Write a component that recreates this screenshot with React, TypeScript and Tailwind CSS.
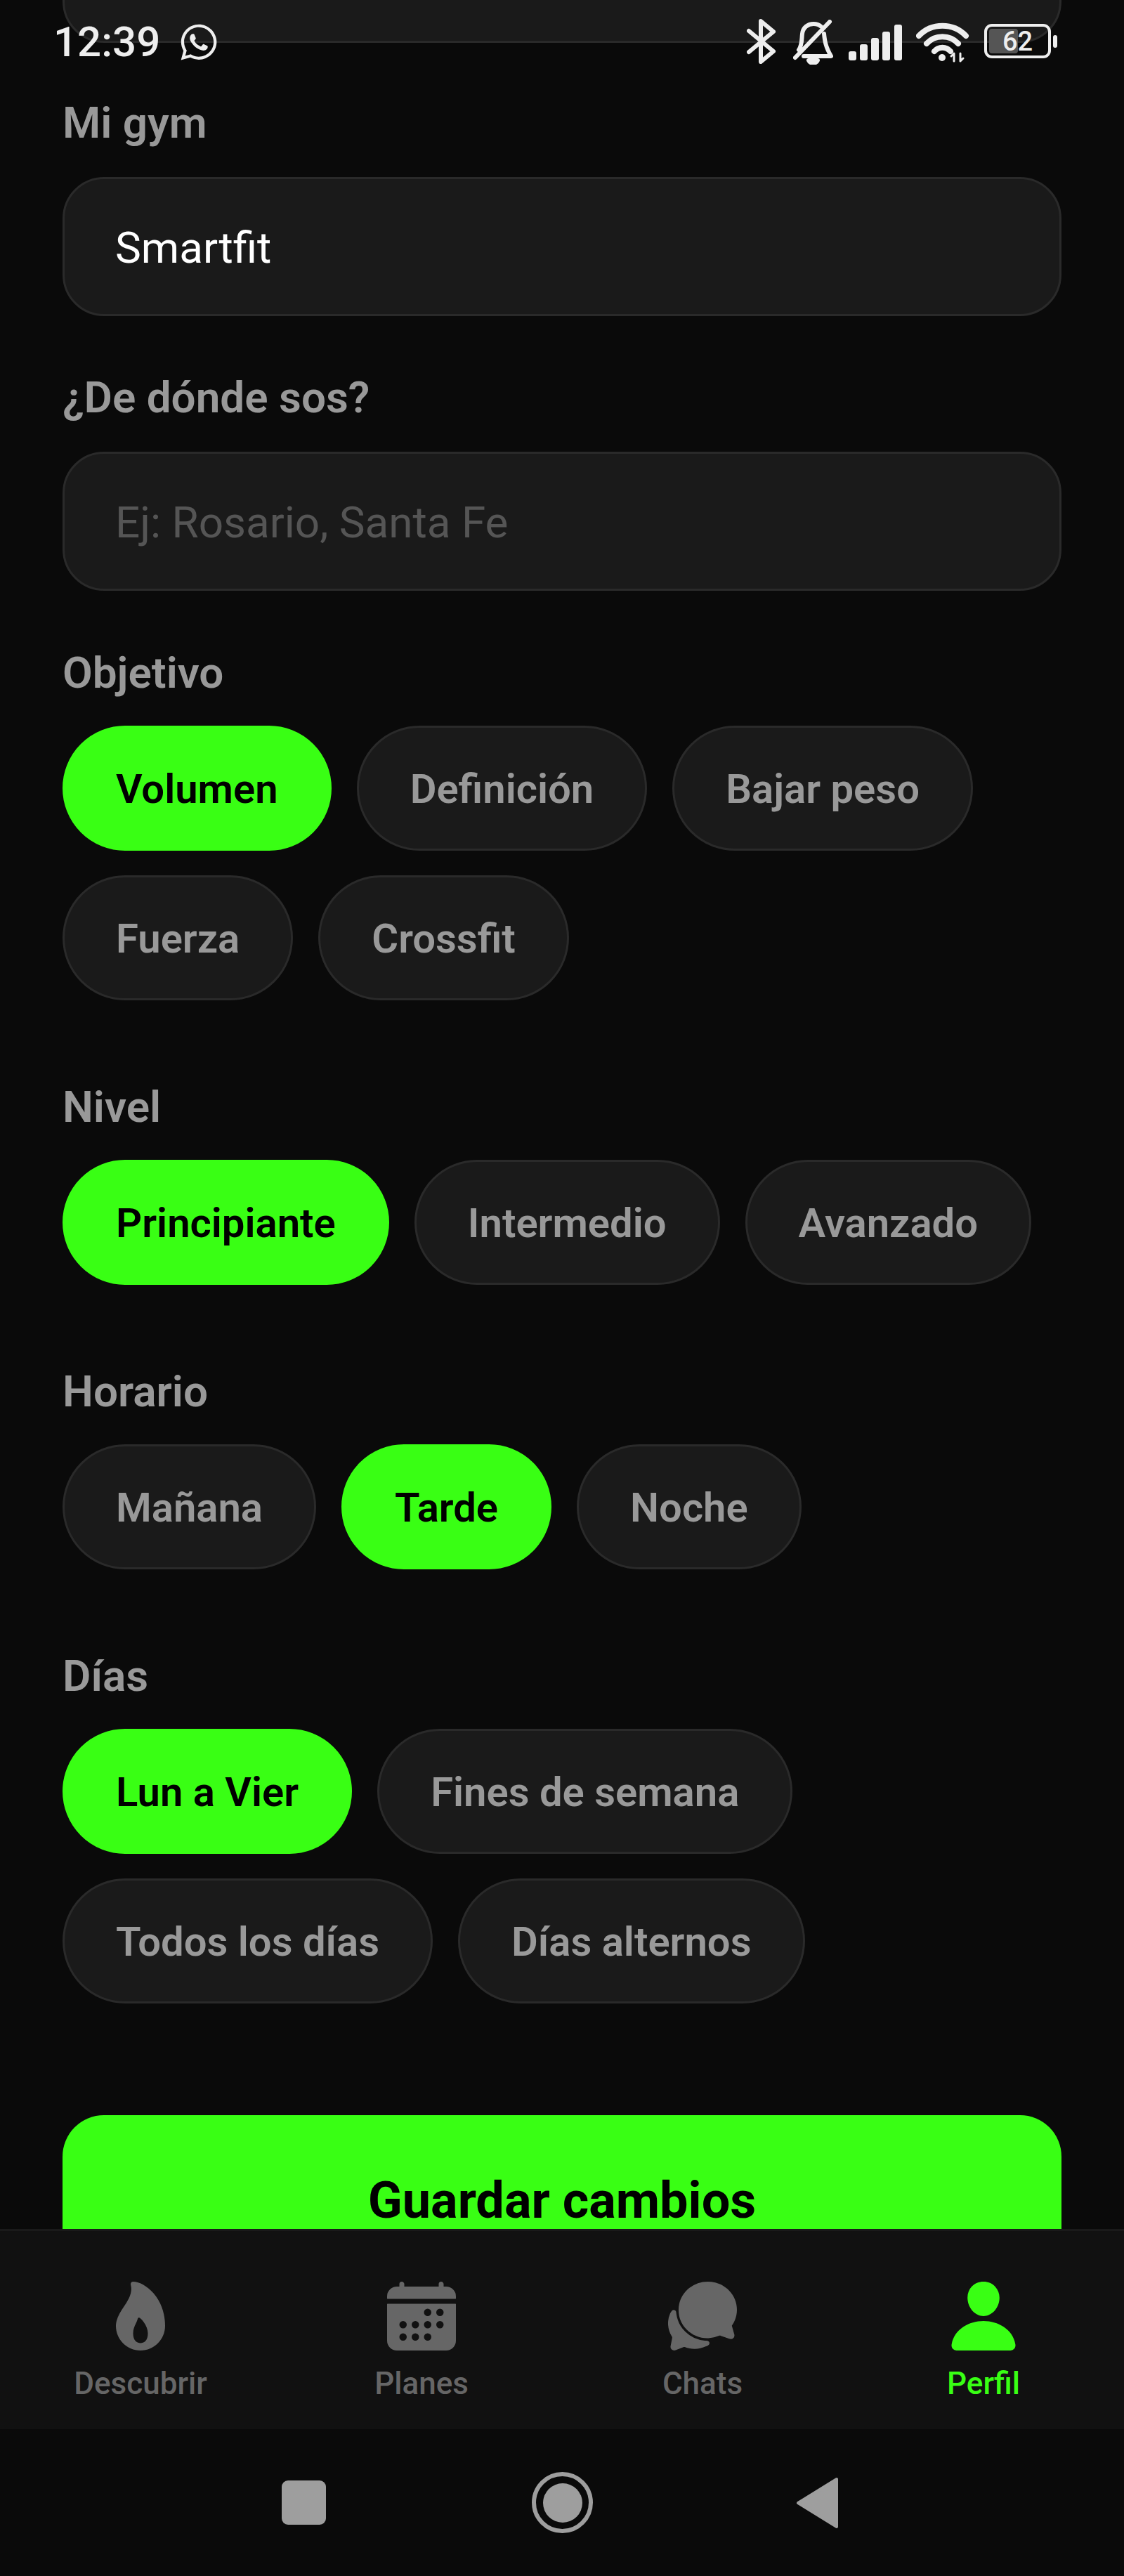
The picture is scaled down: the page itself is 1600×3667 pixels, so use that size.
import { FaWhatsapp } from 'react-icons/fa'
import { IoCalendar, IoChatbubbles, IoFlame, IoPerson } from 'react-icons/io5'
import type { ReactNode } from 'react'

function Chip({ label, active }: { label: string; active?: boolean }) {
  return (
    <div
      className={
        active
          ? 'h-[178px] rounded-full border-[3px] border-[#39ff14] bg-[#39ff14] px-[73px] pt-[3px] flex items-center text-[58px] font-semibold text-black'
          : 'h-[178px] rounded-full border-[3px] border-[#2a2a2a] bg-[#1a1a1a] px-[73px] pt-[3px] flex items-center text-[58px] font-semibold text-[#999999]'
      }
    >
      {label}
    </div>
  )
}

function ChipGroup({ title, chips, active, className }: { title: string; chips: string[]; active: string; className: string }) {
  return (
    <section className={className}>
      <div className="h-[70px] leading-[70px] text-[62px] font-semibold text-[#999999]">{title}</div>
      <div className="mt-[40px] flex flex-wrap gap-x-[36px] gap-y-[35px]">
        {chips.map((c) => (
          <Chip key={c} label={c} active={c === active} />
        ))}
      </div>
    </section>
  )
}

function Field({ label, value, placeholder, className }: { label: string; value?: string; placeholder?: string; className: string }) {
  return (
    <section className={className}>
      <div className="h-[70px] leading-[70px] text-[62px] font-semibold text-[#999999]">{label}</div>
      <div className="mt-[42px] h-[198px] rounded-[59px] border-[3px] border-[#2a2a2a] bg-[#1a1a1a] px-[72px] pt-[3px] flex items-center text-[62px]">
        {value ? <span className="text-white">{value}</span> : <span className="text-[#555555]">{placeholder}</span>}
      </div>
    </section>
  )
}

function NavItem({ icon, label, active }: { icon: ReactNode; label: string; active?: boolean }) {
  return (
    <div className={active ? 'flex flex-col items-center text-[#39ff14]' : 'flex flex-col items-center text-[#666666]'}>
      {icon}
      <span className="mt-[14px] text-[44px] leading-[52px] font-medium">{label}</span>
    </div>
  )
}

function StatusBar() {
  return (
    <div className="absolute inset-x-0 top-0 h-[100px] text-[#eeeeee]">
      <div className="absolute left-[76px] top-[27px] text-[60px] leading-[66px] font-medium">12:39</div>
      <FaWhatsapp className="absolute left-[254px] top-[31px]" size={58} />
      <svg className="absolute left-[1063px] top-[27px]" width="42" height="64" viewBox="0 0 42 64" fill="none" stroke="#eeeeee" strokeWidth="6" strokeLinejoin="round" strokeLinecap="round">
        <path d="M3 17 L38 46 L20 61 V3 L38 18 L3 47" />
      </svg>
      <svg className="absolute left-[1129px] top-[28px]" width="57" height="64" viewBox="0 0 57 64" fill="none" stroke="#eeeeee" strokeWidth="6" strokeLinecap="round" strokeLinejoin="round">
        <path d="M8 43 C13 36 12 28 13 20 C14 11 21 6 29 6 C33 6 37 7 40 10" />
        <path d="M44 20 C45 30 46 38 54 52 H15" />
        <path d="M3 54 L52 3" />
        <path d="M22 58 H35 C33 63 24 63 22 58 Z" fill="#eeeeee" />
      </svg>
      <svg className="absolute left-[1208px] top-[35px]" width="76" height="51" viewBox="0 0 76 51" fill="#eeeeee">
        <rect x="0" y="38" width="11" height="13" rx="3" />
        <rect x="16" y="28" width="11" height="23" rx="3" />
        <rect x="32" y="19" width="11" height="32" rx="3" />
        <rect x="48" y="10" width="11" height="41" rx="3" />
        <rect x="65" y="0" width="11" height="51" rx="3" />
      </svg>
      <svg className="absolute left-[1304px] top-[32px]" width="76" height="58" viewBox="0 0 76 58" fill="none" stroke="#eeeeee" strokeWidth="8" strokeLinecap="round">
        <path d="M4 19 C22 0 53 0 71 19" />
        <path d="M15 30 C27 17 48 17 60 30" />
        <path d="M26 41 C32 34 43 34 49 41" />
        <circle cx="37" cy="50" r="5" fill="#eeeeee" stroke="none" />
        <path d="M54 55 V44 M54 44 L50 48 M63 44 V55 M63 55 L67 51" strokeWidth="3" />
      </svg>
      <div className="absolute left-[1401px] top-[34px] h-[49px] w-[95px] rounded-[11px] border-[4px] border-[#eeeeee] p-[3px]">
        <div className="h-full w-[50%] rounded-[4px] bg-[#555555]" />
        <div className="absolute inset-0 flex items-center justify-center text-[38px] leading-none font-medium text-[#eeeeee]">62</div>
      </div>
      <div className="absolute left-[1499px] top-[50px] h-[18px] w-[6px] rounded-full bg-[#eeeeee]" />
    </div>
  )
}

export default function App() {
  return (
    <div className="relative flex h-[3667px] w-[1600px] flex-col overflow-hidden bg-[#0a0a0a] font-['Roboto',sans-serif]">
      <main className="min-h-0 flex-1 overflow-hidden px-[89px]">
        <div className="-mt-[137px] h-[198px] rounded-[59px] border-[3px] border-[#2a2a2a] bg-[#1a1a1a]" />
        <Field className="mt-[79px]" label="Mi gym" value="Smartfit" />
        <Field className="mt-[81px]" label="¿De dónde sos?" placeholder="Ej: Rosario, Santa Fe" />
        <ChipGroup className="mt-[82px]" title="Objetivo" chips={['Volumen', 'Definición', 'Bajar peso', 'Fuerza', 'Crossfit']} active="Volumen" />
        <ChipGroup className="mt-[117px]" title="Nivel" chips={['Principiante', 'Intermedio', 'Avanzado']} active="Principiante" />
        <ChipGroup className="mt-[117px]" title="Horario" chips={['Mañana', 'Tarde', 'Noche']} active="Tarde" />
        <ChipGroup className="mt-[117px]" title="Días" chips={['Lun a Vier', 'Fines de semana', 'Todos los días', 'Días alternos']} active="Lun a Vier" />
        <button className="mt-[159px] h-[240px] w-full rounded-[59px] bg-[#39ff14] pt-[3px] text-[72px] font-bold text-black">Guardar cambios</button>
      </main>

      <nav className="grid h-[285px] shrink-0 grid-cols-4 border-t-[3px] border-[#1a1a1a] bg-[#111111] pt-[65px]">
        <NavItem icon={<IoFlame size={112} />} label="Descubrir" />
        <NavItem icon={<IoCalendar size={112} />} label="Planes" />
        <NavItem icon={<IoChatbubbles size={112} />} label="Chats" />
        <NavItem icon={<IoPerson size={112} />} label="Perfil" active />
      </nav>

      <div className="flex h-[209px] shrink-0 items-center justify-center bg-[#0a0a0a] pr-[6px]">
        <div className="h-[63px] w-[63px] rounded-[9px] bg-[#9e9e9e]" />
        <div className="ml-[293px] mr-[289px] flex h-[87px] w-[87px] items-center justify-center rounded-full border-[6px] border-[#9e9e9e]">
          <div className="h-[56px] w-[56px] rounded-full bg-[#9e9e9e]" />
        </div>
        <svg width="60" height="74" viewBox="0 0 60 74" fill="#9e9e9e" stroke="#9e9e9e" strokeWidth="4" strokeLinejoin="round">
          <path d="M58 3 V71 L3 37 Z" />
        </svg>
      </div>

      <StatusBar />
    </div>
  )
}
